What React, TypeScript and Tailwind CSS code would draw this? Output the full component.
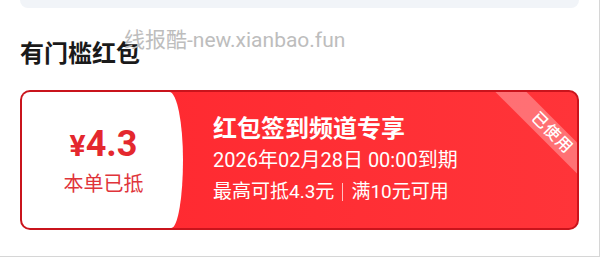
const cjk = 'font-["Roboto","Noto_Sans_CJK_SC","Noto_Sans",sans-serif]'

function Ribbon() {
  return (
    <div className="pointer-events-none absolute left-[460px] top-[30px] flex h-[22px] w-[140px] rotate-45 items-center justify-center bg-white/30">
      <span className="text-[16px] font-medium leading-none tracking-[1px] text-white">已使用</span>
    </div>
  )
}

function CouponCard() {
  return (
    <div className="relative mx-[20px] flex h-[140px] overflow-hidden rounded-[10px] border-2 border-[#c9141c] bg-linear-to-r from-[#e80e19] via-[#ff2a31] via-25% to-[#ff3439]">
      {/* 左侧金额 */}
      <div className="flex w-[161px] shrink-0 flex-col items-center justify-center rounded-tr-[14px_70px] rounded-br-[12px_70px] bg-white pl-[2px]">
        <div className="flex items-baseline font-bold leading-none text-[#e4282e]">
          <span className="text-[30px]">¥</span>
          <span className="text-[36px]">4.3</span>
        </div>
        <div className="mt-[12px] text-[20px] leading-none text-[#e0343a]">本单已抵</div>
      </div>

      {/* 右侧说明 */}
      <div className="flex flex-1 flex-col justify-center pl-[30px] pb-[2px] text-white">
        <div className="text-[24px] font-bold leading-[30px]">红包签到频道专享</div>
        <div className="mt-[2px] text-[20px] leading-[28px]">2026年02月28日 00:00到期</div>
        <div className="mt-[5px] flex items-center text-[19px] leading-[26px]">
          <span>最高可抵4.3元</span>
          <span className="mx-[8px] h-[18px] w-px bg-white/70" />
          <span>满10元可用</span>
        </div>
      </div>

      <Ribbon />
    </div>
  )
}

export default function App() {
  return (
    <div className={`relative h-[257px] w-[600px] overflow-hidden border-r border-b border-[#d6d6d6] bg-white ${cjk}`}>
      <div className="mx-[20px] h-[8px] rounded-b-[10px] bg-[#f1f4f8]" />

      <h2 className="mt-[30px] pl-[20px] text-[24px] font-bold leading-[32px] text-[#1a1a1a]">有门槛红包</h2>

      <div className="mt-[20px]">
        <CouponCard />
      </div>

      {/* 水印 */}
      <div className="pointer-events-none absolute left-[124px] top-[27px] text-[21px] leading-[26px] text-[#bdbdbd]">
        线报酷-new.xianbao.fun
      </div>
    </div>
  )
}
